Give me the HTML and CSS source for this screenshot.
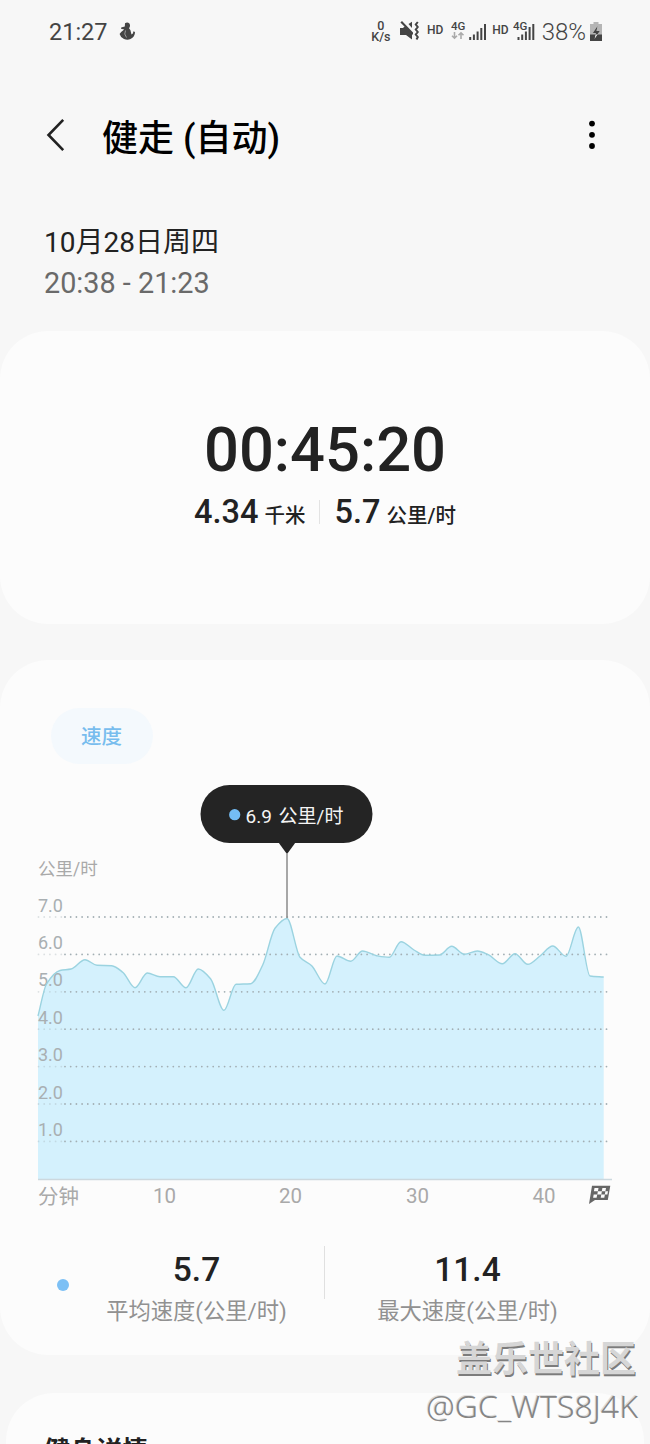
FILE: index.html
```html
<!DOCTYPE html>
<html lang="zh-CN">
<head>
  <meta charset="UTF-8">
  <meta name="viewport" content="width=device-width, initial-scale=1.0">
  <title>健走 (自动)</title>
  <link rel="stylesheet" href="styles.css">
</head>
<body>
  <div class="screen">
    <div class="status-bar">
      <span class="clock">21:27</span>
      <svg class="squirrel" width="17" height="19" viewBox="0 0 17 19">
        <path d="M6 1.2Q8.5-.3 10.4 1.5Q11.8 4 10 6.2Q12.5 8 12.3 12.4Q14.5 12 14.4 9.3L16 10Q16 15 11.5 17Q8.5 18.4 5 17Q1.5 15.5.6 12Q2.5 9.5 5.2 7.6L2 6.8L2.2 5.5L5.8 4.5Z"/>
        <path class="cut" d="M6.5 8.5Q4.5 12 7.5 15.5"/>
      </svg>
      <div class="status-icons">
        <div class="net-speed"><span>0</span><span>K/s</span></div>
        <svg class="mute" width="20" height="20" viewBox="0 0 20 20">
          <path d="M1 7H4L6 5L13 12V18.6L7 14H1ZM9.5 3L13 .7V7ZM1.4 1.4L3 .1L14 11.5V14Z"/>
          <path class="wave" d="M18.8 1L16.8 3.5L18.8 6L16.8 8.5L18.8 11L16.8 13.5L18.8 16L17.5 18.5"/>
        </svg>
        <span class="hd">HD</span>
        <svg class="signal-a" width="36" height="20" viewBox="0 0 36 20">
          <text x="0" y="9">4G</text>
          <path class="arrows" d="M3.5 11V17M1 14.7L3.5 17.2L6 14.7M10 18V12M7.5 14.3L10 11.8L12.5 14.3"/>
          <path class="bars" d="M19.2 19V16M22.9 19V13.5M26.6 19V10.5M30.3 19V7M34 19V3"/>
        </svg>
        <span class="hd hd-b">HD</span>
        <svg class="signal-b" width="22" height="20" viewBox="0 0 22 20">
          <text x="0" y="9">4G</text>
          <path class="bars" d="M5.5 19V16M9.2 19V13.5M12.9 19V10.5M16.6 19V6M20.3 19V3"/>
        </svg>
        <span class="percent">38%</span>
        <svg class="battery" width="12" height="19" viewBox="0 0 12 19">
          <path class="cell" d="M3.5 0H8.5V2H12V19H0V2H3.5Z"/>
          <path d="M0 12.5H12V19H0Z"/>
          <path class="bolt-gap" d="M7.5 4L2.8 11H6L4.5 17L9.8 9H6.5Z"/>
          <path d="M7.5 4L2.8 11H6L5.4 12.5H7.4L9.8 9H6.5Z"/>
        </svg>
      </div>
    </div>

    <header class="header">
      <svg class="back" width="20" height="34" viewBox="0 0 20 34">
        <path d="M17.2 1.8L2.5 17L17.2 32.2"/>
      </svg>
      <h1>健走 (自动)</h1>
      <svg class="more" width="8" height="30" viewBox="0 0 8 30">
        <circle cx="4" cy="3.6" r="2.9"/><circle cx="4" cy="14.8" r="2.9"/><circle cx="4" cy="26" r="2.9"/>
      </svg>
    </header>

    <div class="when">
      <div class="date">10月28日周四</div>
      <div class="range">20:38 - 21:23</div>
    </div>

    <section class="card summary">
      <div class="duration">00:45:20</div>
      <div class="totals">
        <div><b>4.34</b> <span>千米</span></div>
        <i></i>
        <div><b>5.7</b> <span>公里/时</span></div>
      </div>
    </section>

    <section class="card speed">
      <span class="chip">速度</span>
      <svg class="chart" width="650" height="436" viewBox="0 780 650 436">
        <path id="area" class="area"/>
        <g id="grid"></g>
        <path id="line" class="line"/>
        <path class="axis" d="M38 1179.5H612"/>
        <text class="unit" x="38" y="875">公里/时</text>
        <g class="x-labels">
          <text x="38" y="1203.5" class="first">分钟</text>
          <text x="164.5" y="1203">10</text>
          <text x="290.5" y="1203">20</text>
          <text x="417.5" y="1203">30</text>
          <text x="544" y="1203">40</text>
        </g>
        <g class="flag">
          <path d="M592 1185.7H610.3L607.8 1200H595L589 1204Z"/>
          <path class="checks" d="M594.5 1188h4l-.6 3.3h-4ZM602.4 1188h3.6l-.6 3.3h-3.6ZM597.9 1191.3h4l-.6 3.2h-4ZM605.4 1191.3h2.6l-.6 3.2h-2.6ZM593.7 1194.5h3.5l-.6 3.3h-3.5ZM601.3 1194.5h3.6l-.6 3.3h-3.6Z"/>
        </g>
        <path class="marker" d="M287 850V918"/>
        <rect class="bubble" x="200.5" y="785" width="172" height="58" rx="29"/>
        <path class="bubble" d="M278.5 842.5H295.5L288.2 852.5Q287 854 285.8 852.5Z"/>
        <circle class="dot" cx="234.7" cy="814.7" r="5.6"/>
        <text class="bubble-text" x="245.5" y="822.5">6.9 公里/时</text>
      </svg>
      <div class="stats">
        <span class="stats-dot"></span>
        <div class="stat">
          <b>5.7</b>
          <span>平均速度(公里/时)</span>
        </div>
        <i></i>
        <div class="stat">
          <b>11.4</b>
          <span>最大速度(公里/时)</span>
        </div>
      </div>
    </section>

    <section class="card details">
      <h2>健身详情</h2>
    </section>

    <div class="watermark">
      <div class="community">盖乐世社区</div>
      <div class="user">@GC_WTS8J4K</div>
    </div>
  </div>
  <script>
    const points = [
      [38, 1016], [46.5, 984], [60, 970.5], [71, 969], [85, 959.7], [97, 965.3], [111.7, 965.7],
      [123, 972.5], [135, 987.7], [147.3, 973], [160, 976.7], [173.3, 976.7], [186, 987.7],
      [198.3, 969], [210.7, 979], [224, 1010.3], [236, 984.3], [250.7, 983.7], [262.7, 965],
      [275, 928.3], [287, 918.5], [300, 957.3], [311.7, 965.7], [325, 984], [337, 956],
      [350.7, 961.3], [362.5, 951], [376.7, 955.7], [389.3, 957.3], [401, 941.7], [414, 950],
      [425, 955.3], [439.3, 955], [451.7, 946.3], [464.3, 954.3], [477.3, 951], [488.3, 954.7],
      [502.3, 963.7], [515, 953.7], [527.7, 964.3], [540, 956], [552.7, 946], [566, 956.3],
      [578.3, 927], [590, 976], [603.7, 977]
    ];

    function slope(i) {
      if (i === 0 || i === points.length - 1) {
        const j = i === 0 ? 1 : i;
        return (points[j][1] - points[j - 1][1]) / (points[j][0] - points[j - 1][0]);
      }
      const a = (points[i][1] - points[i - 1][1]) / (points[i][0] - points[i - 1][0]);
      const b = (points[i + 1][1] - points[i][1]) / (points[i + 1][0] - points[i][0]);
      // flat at peaks and dips so the curve does not overshoot
      return a * b <= 0 ? 0 : 2 * a * b / (a + b);
    }

    let path = 'M' + points[0].join(' ');
    for (let i = 1; i < points.length; i++) {
      const [x0, y0] = points[i - 1];
      const [x1, y1] = points[i];
      const d = (x1 - x0) / 3;
      path += `C${x0 + d} ${y0 + d * slope(i - 1)} ${x1 - d} ${y1 - d * slope(i)} ${x1} ${y1}`;
    }
    document.getElementById('line').setAttribute('d', path);
    document.getElementById('area').setAttribute('d', path + 'V1179H38Z');

    let grid = '';
    for (let v = 1; v <= 7; v++) {
      const y = 1178.8 - v * 37.4;
      grid += `<path class="faint" d="M38.5 ${y}H62"/><path d="M65 ${y}H608"/><text x="38" y="${y - 5.4}">${v}.0</text>`;
    }
    document.getElementById('grid').innerHTML = grid;
  </script>
</body>
</html>
```
FILE: styles.css
```css
* {
  box-sizing: border-box;
}
body {
  margin: 0;
  background: #f7f7f7;
  color: #222;
  font-family: Roboto, "Noto Sans CJK SC", sans-serif;
}
.screen {
  position: relative;
  width: 650px;
  height: 1444px;
  overflow: hidden;
}
h1, h2 {
  margin: 0;
}

.status-bar {
  display: flex;
  align-items: center;
  height: 62px;
  padding: 0 48px 0 49px;
  color: #444;
}
.status-bar svg {
  fill: #444;
}
.clock {
  padding-top: 1px;
  font-size: 23.5px;
}
.squirrel {
  margin-left: 11px;
}
.squirrel .cut {
  fill: none;
  stroke: #999;
  stroke-width: 1;
}
.status-icons {
  display: flex;
  align-items: center;
  margin-left: auto;
}
.net-speed {
  display: flex;
  flex-direction: column;
  align-items: center;
  width: 20px;
  font-size: 12.5px;
  line-height: 11px;
  font-weight: 500;
}
.mute {
  margin-left: 8px;
}
.mute .wave {
  fill: none;
  stroke: #444;
  stroke-width: 2;
}
.hd {
  margin-left: 8px;
  font-size: 12px;
  font-weight: 500;
  line-height: 14px;
  padding-bottom: 2px;
}
.status-icons text {
  font-size: 11.5px;
  font-weight: 500;
}
.signal-a {
  margin-left: 8px;
}
.hd-b {
  margin-left: 5px;
}
.signal-b {
  margin-left: 4px;
}
.bars {
  stroke: #444;
  stroke-width: 2;
}
.arrows {
  fill: none;
  stroke: #aaa;
  stroke-width: 1.6;
}
.percent {
  margin-left: 7px;
  padding-top: 1px;
  font-size: 24px;
  font-weight: 300;
}
.battery {
  margin-left: 4px;
}
.battery .cell {
  fill: #b5b5b5;
}
.battery .bolt-gap {
  fill: #f7f7f7;
}

.header {
  display: flex;
  align-items: center;
  height: 146px;
  padding: 0 54px 0 46px;
}
.back {
  fill: none;
  stroke: #222;
  stroke-width: 2.6;
}
.header h1 {
  margin-left: 36px;
  padding-top: 7px;
  color: #000;
  font-size: 36px;
  font-weight: 500;
  line-height: 50px;
}
.more {
  margin-left: auto;
}

.when {
  height: 123px;
  padding: 14px 44px 0;
  font-size: 28px;
  line-height: 41px;
}
.range {
  color: #6a6a6a;
  font-size: 28.8px;
}

.card {
  background: #fcfcfc;
  border-radius: 48px;
}
.summary {
  height: 293px;
  padding-top: 85px;
}
.duration {
  font-size: 61.5px;
  font-weight: 500;
  line-height: 68px;
  text-align: center;
}
.totals {
  display: flex;
  justify-content: center;
  align-items: center;
  margin-top: 6px;
  line-height: 44px;
}
.totals b {
  font-size: 32.5px;
  font-weight: 500;
}
.totals span {
  font-size: 20.5px;
  font-weight: 500;
}
.totals div {
  word-spacing: 2px;
}
.totals i {
  width: 1px;
  height: 24px;
  margin: 0 14px 6px;
  background: #e3e3e3;
}

.speed {
  display: flex;
  flex-direction: column;
  align-items: flex-start;
  height: 695px;
  margin-top: 36px;
  padding-top: 48px;
}
.chip {
  width: 102px;
  height: 56px;
  margin-left: 50.5px;
  border-radius: 28px;
  background: #f4f9fd;
  color: #78bdee;
  font-size: 20.5px;
  font-weight: 500;
  line-height: 58px;
  text-align: center;
}
.chart {
  display: block;
  margin-top: 16px;
}
.area {
  fill: #d4f1fd;
}
.line {
  fill: none;
  stroke: #9bd3e0;
  stroke-width: 1.4;
}
.axis {
  stroke: #ccd8de;
  stroke-width: 1.5;
}
#grid path {
  stroke: #a3afb4;
  stroke-width: 1.8;
  stroke-linecap: round;
  stroke-dasharray: 0 5.7;
}
#grid .faint {
  opacity: 0.35;
}
#grid text {
  fill: #a9afb2;
  font-size: 18px;
}
.unit {
  fill: #a9a9a9;
  font-size: 17.5px;
}
.x-labels {
  fill: #a9a9a9;
  font-size: 20.5px;
  text-anchor: middle;
}
.x-labels .first {
  text-anchor: start;
}
.flag {
  fill: #666;
}
.flag .checks {
  fill: #fcfcfc;
}
.marker {
  stroke: #8b8b8b;
  stroke-width: 1.5;
}
.bubble {
  fill: #242424;
}
.dot {
  fill: #74bdf5;
}
.bubble-text {
  fill: #f4f4f4;
  font-size: 19px;
  word-spacing: 2px;
}

.stats {
  display: flex;
  align-items: flex-start;
  width: 100%;
  margin-top: 30px;
  padding-left: 57px;
}
.stats-dot {
  width: 12px;
  height: 12px;
  margin-top: 33px;
  border-radius: 50%;
  background: #7cc0f5;
}
.stats i {
  width: 1px;
  height: 53px;
  background: #e0e0e0;
}
.stat {
  display: flex;
  flex-direction: column;
  align-items: center;
  width: 255px;
  padding-top: 4px;
}
.stat + i + .stat {
  width: 285px;
}
.stat b {
  font-size: 33.5px;
  font-weight: 500;
  line-height: 40px;
}
.stat span {
  color: #919191;
  font-size: 22.3px;
  line-height: 43px;
}

.details {
  width: 638px;
  height: 200px;
  margin: 38px 6px 0;
  padding: 41px 38px;
}
.details h2 {
  font-size: 26px;
  line-height: 34px;
}

.watermark {
  position: absolute;
  right: 12px;
  bottom: 16px;
  text-align: right;
}
.community {
  position: relative;
  top: 1px;
  right: 2px;
  color: #d6d6d6;
  font-size: 36px;
  font-weight: 700;
  line-height: 50px;
  text-shadow: 1px 2px 0 #7c7c7c;
}
.user {
  color: #858585;
  font-family: "Noto Sans", sans-serif;
  font-size: 32px;
  font-weight: 300;
  line-height: 44px;
  text-shadow: -1px -1px 0 #ddd;
}
```
